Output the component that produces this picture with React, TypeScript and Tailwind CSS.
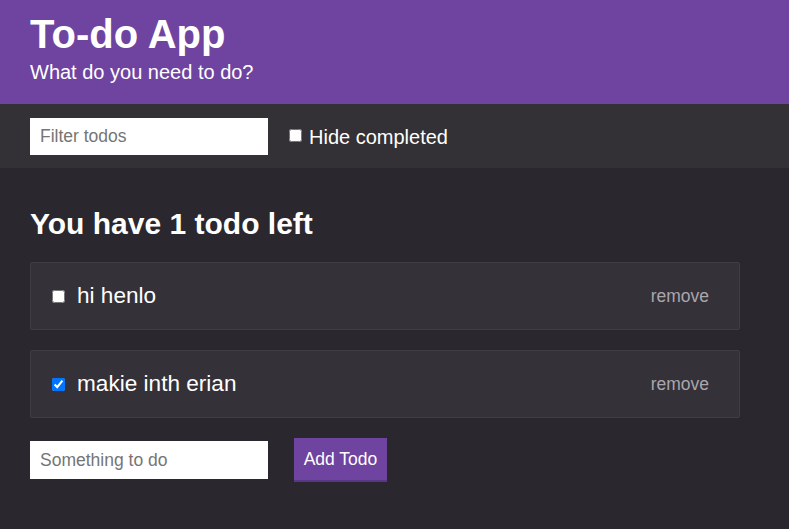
import React, { useState } from "react";

type Todo = { id: number; text: string; done: boolean };

export default function App() {
  const [todos, setTodos] = useState<Todo[]>([
    { id: 1, text: "hi henlo", done: false },
    { id: 2, text: "makie inth erian", done: true },
  ]);
  const left = todos.filter((t) => !t.done).length;

  return (
    <div
      className="min-h-screen bg-[#2a272e] text-white"
      style={{ fontFamily: '"Liberation Sans", Arial, sans-serif' }}
    >
      <header className="bg-[#6f44a0] px-[30px] pt-[14px] pb-[22px]">
        <h1 className="text-[40px] leading-[40px] font-bold">To-do App</h1>
        <p className="mt-[8px] text-[20px] leading-[20px]">What do you need to do?</p>
      </header>

      <div className="bg-[#333036] px-[30px] pt-[14px] pb-[13px] flex items-center">
        <input
          className="w-[238px] h-[37px] bg-white text-black pl-[10px] text-[17.5px] outline-none placeholder:text-[#757575]"
          placeholder="Filter todos"
        />
        <label className="ml-[21px] flex items-center text-[20px] leading-[20px]">
          <input type="checkbox" className="w-[13px] h-[13px] mb-[3px]" />
          <span className="ml-[7px]">Hide completed</span>
        </label>
      </div>

      <main className="px-[30px] pt-[41px]">
        <h2 className="text-[30px] leading-[30px] font-bold">
          You have {left} todo left
        </h2>
        <div className="mt-[23px] flex flex-col gap-[20px] w-[710px]">
          {todos.map((t) => (
            <div
              key={t.id}
              className="h-[68px] flex items-center bg-[#343138] border border-[#3f3c44] rounded-[2px] pl-[21px] pr-[30px]"
            >
              <input
                type="checkbox"
                checked={t.done}
                onChange={() =>
                  setTodos(todos.map((x) => (x.id === t.id ? { ...x, done: !x.done } : x)))
                }
                className="w-[13px] h-[13px]"
              />
              <span className="ml-[12px] text-[22.6px] leading-[22px] flex-1">{t.text}</span>
              <button className="text-[17.5px] text-[#a9a7ad]">remove</button>
            </div>
          ))}
        </div>
        <div className="mt-[20px] flex items-center">
          <input
            className="w-[238px] h-[38px] bg-white text-black pl-[10px] text-[17.5px] outline-none placeholder:text-[#757575]"
            placeholder="Something to do"
          />
          <button className="ml-[26px] h-[44px] w-[93px] bg-[#6f44a0] border-b-2 border-[#5a3686] text-[17.5px] text-white">
            Add Todo
          </button>
        </div>
      </main>
    </div>
  );
}
